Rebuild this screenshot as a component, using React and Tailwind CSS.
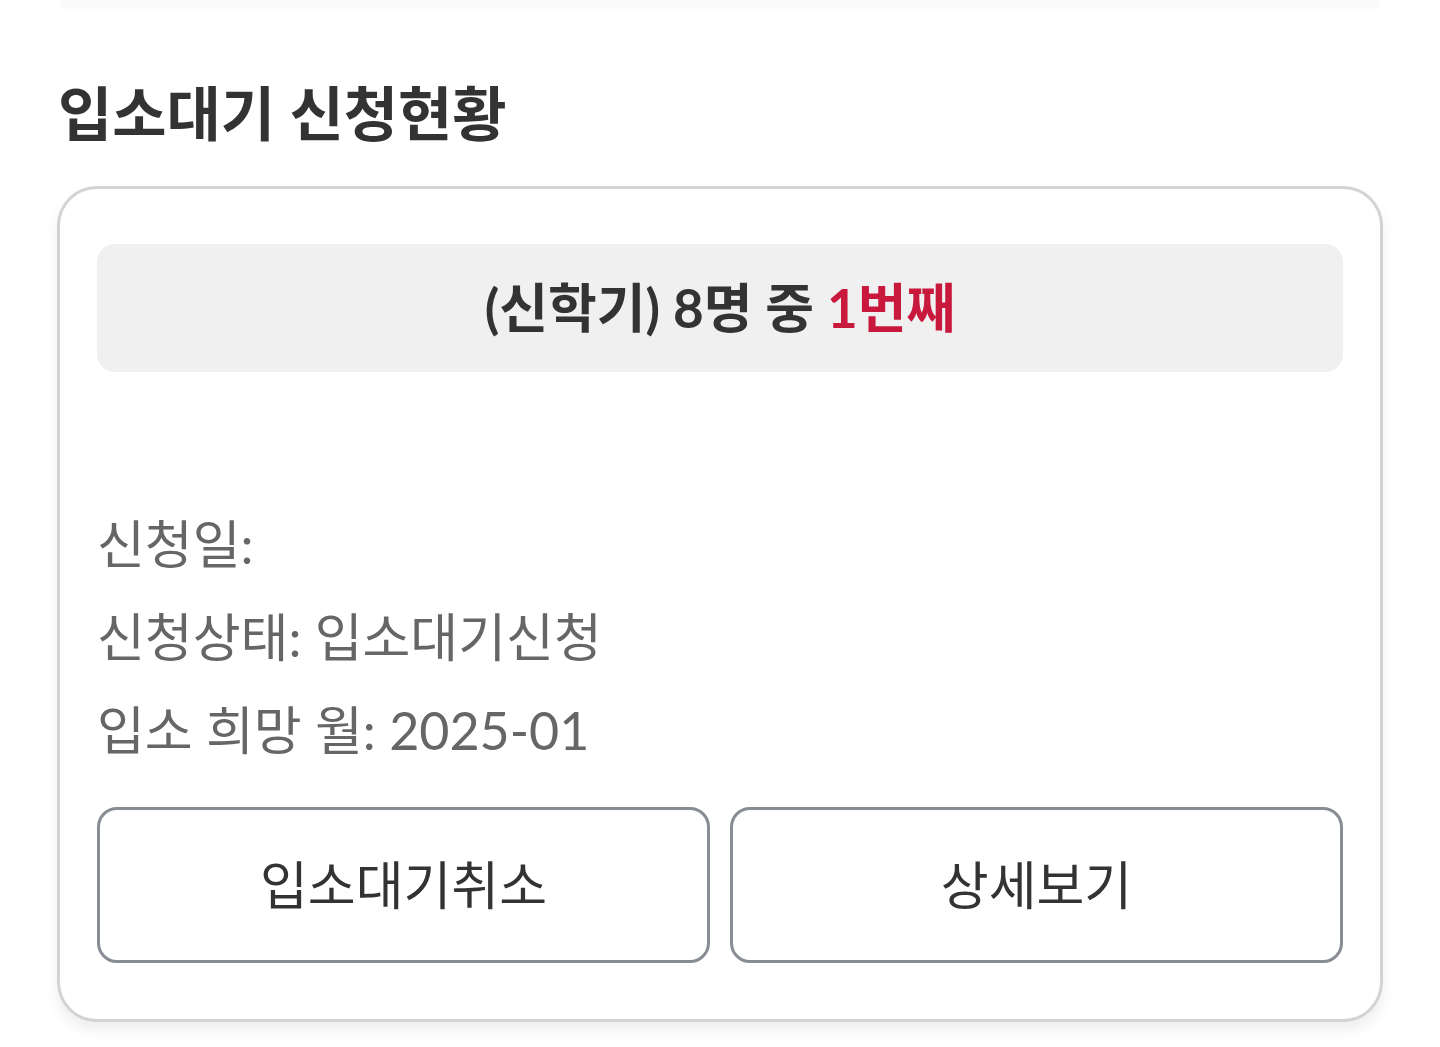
import React from 'react';

const font = "font-['Lato','Noto_Sans_CJK_KR',sans-serif]";

const InfoLine = ({ label, value }) => (
  <p className="h-[93px] leading-[93px] text-[52px] text-[#666666] whitespace-nowrap">
    {label}: {value}
  </p>
);

const App = () => {
  return (
    <div className={`min-h-[1047px] bg-white ${font}`}>
      <div className="mx-[60px] h-[8px] rounded-b-[20px] bg-[#fafafa] shadow-[0_2px_4px_rgba(0,0,0,0.02)]" />

      <div className="px-[57px] pt-[66px]">
        <h2 className="text-[59px] leading-[80px] font-bold text-[#333333] pl-[1px]">
          입소대기 신청현황
        </h2>

        <div className="mt-[32px] w-[1326px] rounded-[40px] border-[3px] border-[#d3d3d3] bg-white px-[37px] pt-[55px] pb-[56px] shadow-[0_8px_14px_rgba(0,0,0,0.07)]">
          <div className="flex h-[128px] items-center justify-center rounded-[18px] bg-[#f0f0f0]">
            <p className="text-[53px] font-bold text-[#333333]">
              (신학기) 8명 중 <span className="text-[#c8193c]">1번째</span>
            </p>
          </div>

          <div className="h-[126px]" />

          <div>
            <InfoLine label="신청일" value="" />
            <InfoLine label="신청상태" value="입소대기신청" />
            <InfoLine label="입소 희망 월" value="2025-01" />
          </div>

          <div className="mt-[30px] grid grid-cols-2 gap-[20px]">
            <button className="flex h-[156px] items-center justify-center rounded-[20px] border-[3px] border-[#878c95] bg-white text-[52px] text-[#333333]">
              입소대기취소
            </button>
            <button className="flex h-[156px] items-center justify-center rounded-[20px] border-[3px] border-[#878c95] bg-white text-[52px] text-[#333333]">
              상세보기
            </button>
          </div>
        </div>
      </div>
    </div>
  );
};

export default App;
